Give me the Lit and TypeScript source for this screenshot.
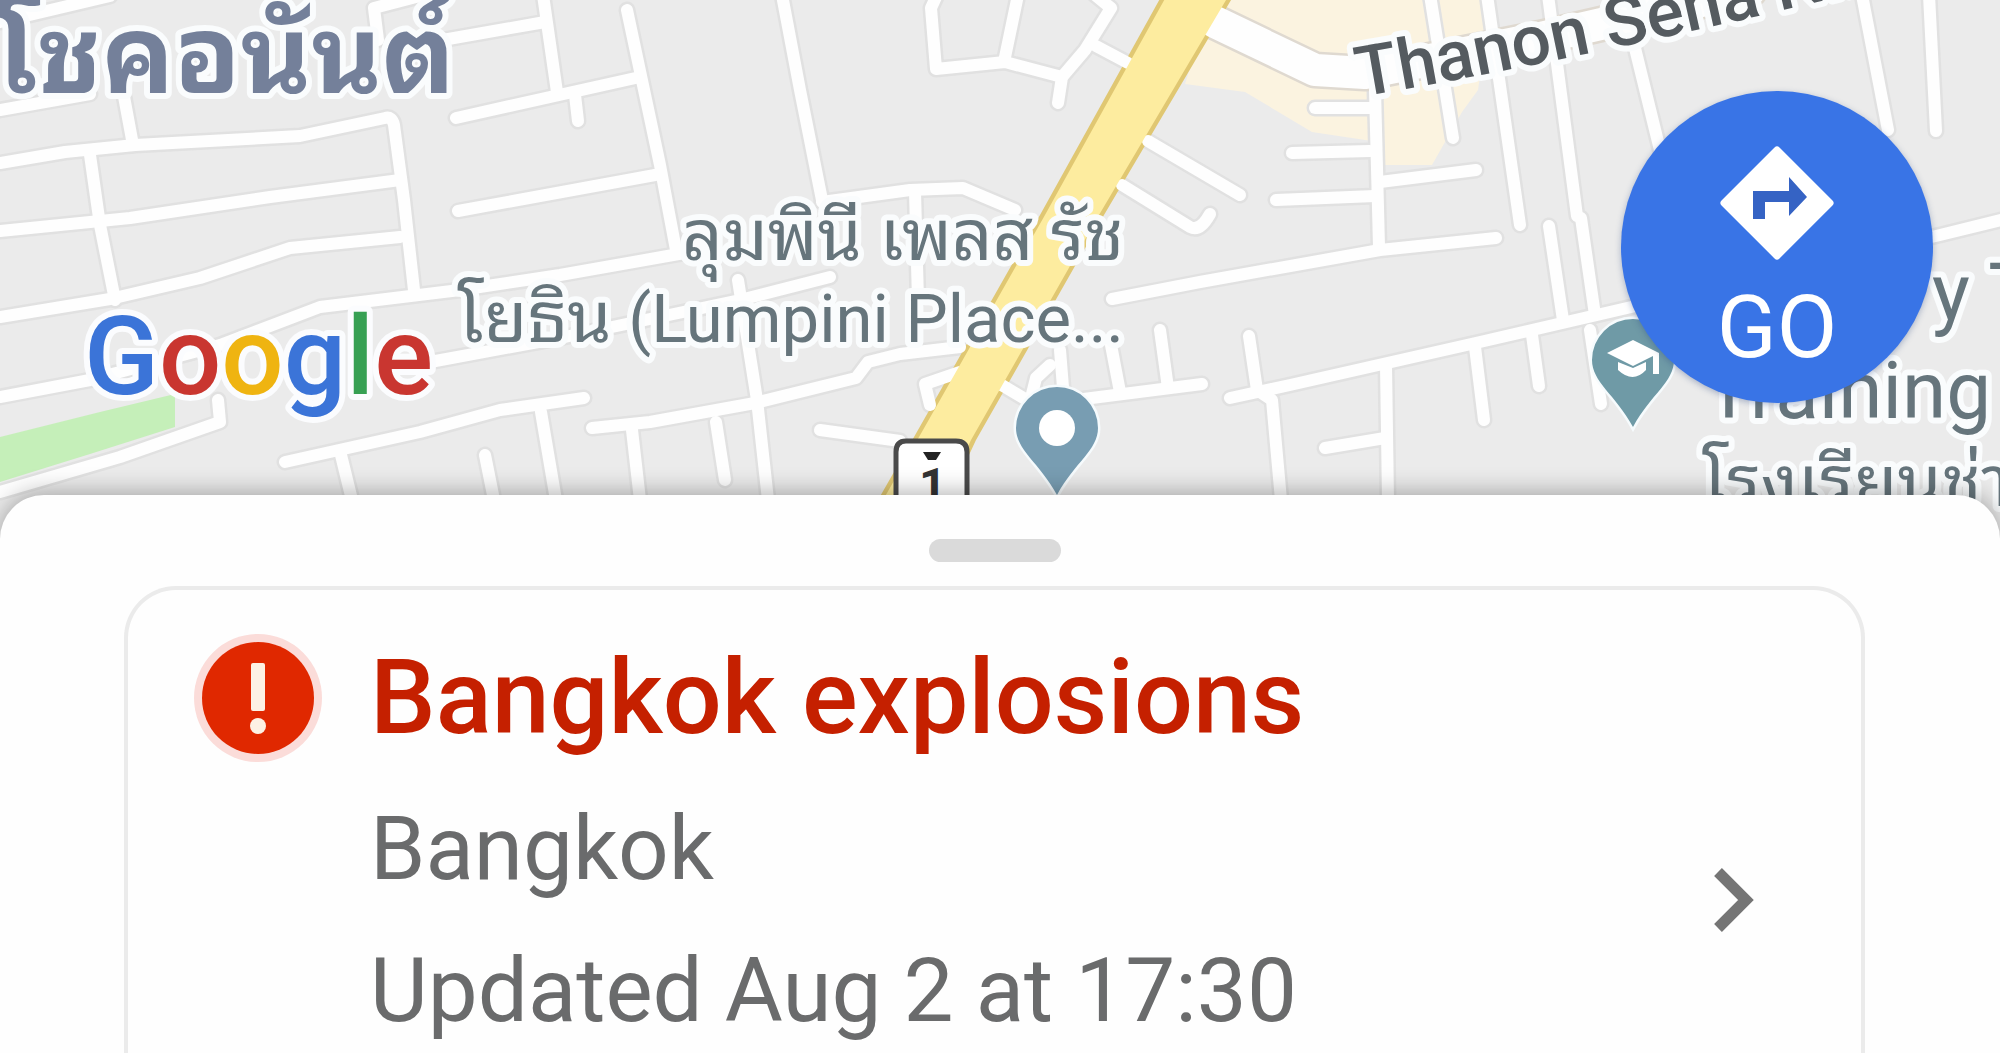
import { LitElement, html, css, svg } from "lit";
import { customElement } from "lit/decorators.js";

/* Minor streets, in map units (the map is 2000 units wide). */
const STREETS: string[] = [
  "M0 22L110-4",
  "M0 110L90 94",
  "M0 163L65 152L135 145L300 136L385 118Q392 116 394 125L404 200L414 290",
  "M120 75L133 145",
  "M0 231L130 218L270 197L400 180",
  "M90 155L100 225L115 300",
  "M0 317L110 299L200 278L290 248L400 237",
  "M0 397L90 380L220 345L320 307L460 290L560 275L690 252",
  "M430 362L560 338L740 300L830 277",
  "M218 400L220 422L120 457L0 492",
  "M285 462L420 432L500 410L584 398",
  "M341 455L352 500",
  "M485 455L494 500",
  "M541 412L556 500",
  "M592 428L650 422L755 403L856 378L868 362L900 354L960 347",
  "M632 430L640 500",
  "M716 422L725 480",
  "M738 280L757 400L768 500",
  "M456 118L640 77",
  "M575 95L578 121",
  "M458 211L655 175",
  "M543-5L557 92",
  "M420 44L545 22",
  "M378 40L374 8L420-4",
  "M627 10L660 165L676 250",
  "M782-5L800 90L822 200",
  "M822 202L910 190L963 188L1015 210",
  "M915 192L918 300",
  "M937-5L931 8L936 69L1005 62L1062 77",
  "M1018-5L1004 62",
  "M1095-5L1111 8L1085 50L1062 77L1058 103",
  "M1096 46L1128 63",
  "M1148 141L1240 195",
  "M1122 185L1190 227Q1200 232 1210 214",
  "M1315 108L1370 108",
  "M1292 153L1370 151",
  "M1276 200L1375 196",
  "M1380 182L1476 170",
  "M1375 90L1379 247",
  "M1112 299L1200 282L1380 250L1496 238",
  "M1430-5L1453 138",
  "M1487-5L1520 225",
  "M1548-5L1577 216",
  "M1581 218L1595 315",
  "M1549 226L1563 320",
  "M1230 398L1290 385L1480 342L1640 305L1940 235L2005 219",
  "M1249 336L1257 390L1272 400L1281 500",
  "M1386 365L1388 500",
  "M1325 448L1385 438",
  "M1475 347L1484 420",
  "M1532 335L1539 386",
  "M1590 330L1601 404",
  "M1060 350L1064 400",
  "M1060 402L1202 384",
  "M1111 345L1120 392",
  "M1160 330L1168 388",
  "M960 372L925 384L930 405",
  "M1000 384L1030 402L1036 378L1050 365",
  "M820 430L900 441",
  "M1633 40L1660 150",
  "M1862-5L1888 130",
  "M1929-5L1936 131",
];

const streets = svg`${STREETS.map((d) => svg`<path d=${d} />`)}`;

/* Teardrop marker with its centre at the origin and its tip 67 units below. */
const PIN = "M0-41A41 41 0 0 1 41 0C41 22 18 34 0 67C-18 34-41 22-41 0A41 41 0 0 1 0-41Z";

@customElement("map-view")
export class MapView extends LitElement {
  static styles = css`
    :host {
      display: block;
      background: #ebebeb;
    }
    .map {
      display: block;
      width: 100%;
      height: auto;
    }
    .line {
      fill: none;
      stroke-linecap: round;
      stroke-linejoin: round;
    }
    .casing {
      stroke: #e1e1e1;
      stroke-width: 17;
    }
    .street {
      stroke: #fefefe;
      stroke-width: 12;
    }
    .avenue-casing {
      stroke: #dfd9d0;
      stroke-width: 37;
    }
    .avenue {
      stroke: #fefefe;
      stroke-width: 32;
    }
    .label {
      font-family: Roboto, "Noto Sans Thai Looped", "Noto Sans Thai", "Noto Sans", sans-serif;
      fill: #66757c;
      stroke: #fafcfd;
      stroke-width: 12;
      stroke-linejoin: round;
      paint-order: stroke;
    }
    .place {
      font-size: 67px;
    }
    .thai {
      font-size: 71px;
    }
    .school {
      font-size: 80px;
    }
    .district {
      font-size: 108px;
      font-weight: 700;
      fill: #74809a;
    }
    .road-name {
      font-size: 70px;
      font-weight: 500;
      fill: #555b60;
    }
    .shield-number {
      font-family: Roboto, sans-serif;
      font-size: 48px;
      font-weight: 700;
      fill: #333;
    }
    .logo {
      font-family: Roboto, sans-serif;
      font-size: 110px;
      font-weight: 500;
      stroke: #fbfcfe;
      stroke-width: 12;
      stroke-linejoin: round;
      paint-order: stroke;
    }
    .blue {
      fill: #3b74d8;
    }
    .red {
      fill: #c93630;
    }
    .yellow {
      fill: #efb411;
    }
    .green {
      fill: #37a053;
    }
  `;

  render() {
    return html`
      <svg class="map" viewBox="0 0 2000 540" role="img" aria-label="Map">
        <rect width="2000" height="540" fill="#ebebeb" />
        <path
          d="M1225-5H1492L1478 90L1462 112L1432 165H1385V143L1312 132L1245 92L1185 84L1200 36Z"
          fill="#fbf3e0"
        />
        <path d="M0 437L100 412L175 394V427L90 454L0 482Z" fill="#c5efb9" />

        <g class="line casing">${streets}</g>
        <path class="line avenue-casing" d="M1215 22L1315 70L1365 73L1540 38L1750-10" />
        <path d="M1162-5L1040 215L918 430L878 500L948 500L976 440L1104 215L1234-5Z" fill="#e0c772" />
        <g class="line street">${streets}</g>
        <path class="line avenue" d="M1215 22L1315 70L1365 73L1540 38L1750-10" />
        <path d="M1167-5L1045 215L923 430L883 500L943 500L971 440L1099 215L1229-5Z" fill="#fdec9f" />

        <path
          d="M906 441H956Q967 441 967 452V545H896V452Q896 441 906 441Z"
          fill="#fff"
          stroke="#4a4a4a"
          stroke-width="5"
        />
        <path d="M923 452H941L936 460H928Z" fill="#222" />
        <text class="shield-number" x="919" y="502">1</text>

        <g transform="translate(1057 428)">
          <path d=${PIN} fill="#789db2" stroke="#f6fbfd" stroke-width="5" paint-order="stroke" />
          <circle r="18" fill="#fff" />
        </g>
        <g transform="translate(1633 360)">
          <path d=${PIN} fill="#6f9aa6" stroke="#f6fbfd" stroke-width="5" paint-order="stroke" />
          <path d="M-26-7L0-20L26-7V14H20V-4L0 6Z" fill="#fff" />
          <path d="M-15 2V10Q0 24 13 10V2L0 8Z" fill="#fff" />
        </g>

        <text class="label district" x="-4" y="93">โชคอนันต์</text>
        <text class="label thai" x="1124" y="260" text-anchor="end">ลุมพินี เพลส รัช</text>
        <text class="label place" x="1124" y="342" text-anchor="end"><tspan class="thai">โยธิน</tspan> (Lumpini Place...</text>
        <path id="road-line" d="M1360 97Q1600 56 1900-18" fill="none" />
        <text class="label road-name">
          <textPath href="#road-line">Thanon Sena Nikhom</textPath>
        </text>
        <text class="label school" x="1932" y="320">y T</text>
        <text class="label school" x="1705" y="418">Training</text>
        <text class="label thai" x="1702" y="506">โรงเรียนช่าง</text>

        <text class="logo" x="84" y="394">
          <tspan class="blue">G</tspan><tspan class="red">o</tspan><tspan class="yellow">o</tspan><tspan class="blue">g</tspan><tspan class="green">l</tspan><tspan class="red">e</tspan>
        </text>
      </svg>
    `;
  }
}

@customElement("alert-card")
export class AlertCard extends LitElement {
  static styles = css`
    :host {
      display: flex;
    }
    .card {
      flex: 1;
      display: grid;
      grid-template-columns: 128px minmax(0, 1fr) 48px;
      column-gap: 48px;
      padding: 44px 104px 0 66px;
      border: 4px solid #ebebeb;
      border-bottom: 0;
      border-radius: 52px 52px 0 0;
      color: #6a6b6c;
      text-decoration: none;
      font-family: Roboto, sans-serif;
    }
    .badge {
      width: 128px;
      height: 128px;
    }
    .text {
      display: flex;
      flex-direction: column;
    }
    .title {
      margin: 0 0 16px;
      font-size: 104px;
      font-weight: 500;
      line-height: 128px;
      color: #c52000;
    }
    .line {
      margin: 0;
      font-size: 89px;
      line-height: 142px;
    }
    .chevron {
      width: 48px;
      height: 72px;
      margin-top: 230px;
    }
  `;

  render() {
    return html`
      <a class="card" href="#bangkok-explosions">
        <svg class="badge" viewBox="0 0 128 128" aria-hidden="true">
          <circle cx="64" cy="64" r="64" fill="#fbdcd9" />
          <circle cx="64" cy="64" r="56" fill="#e02800" />
          <rect x="57" y="29" width="14" height="48" rx="2" fill="#fdf1e4" />
          <circle cx="64" cy="92" r="8" fill="#fdf1e4" />
        </svg>
        <div class="text">
          <h1 class="title">Bangkok explosions</h1>
          <p class="line">Bangkok</p>
          <p class="line">Updated Aug 2 at 17:30</p>
        </div>
        <svg class="chevron" viewBox="0 0 48 72" aria-hidden="true">
          <path d="M9 8L37 36L9 64" fill="none" stroke="#757575" stroke-width="11" />
        </svg>
      </a>
    `;
  }
}

@customElement("app-root")
export class AppRoot extends LitElement {
  static styles = css`
    :host {
      display: flex;
      flex-direction: column;
      position: relative;
      height: 100vh;
      overflow: hidden;
      background: #fefefe;
      font-family: Roboto, sans-serif;
    }
    .go {
      position: absolute;
      top: 91px;
      right: 67px;
      display: flex;
      flex-direction: column;
      align-items: center;
      gap: 16px;
      width: 312px;
      height: 312px;
      padding: 52px 0 0;
      border: 0;
      border-radius: 50%;
      background: #3974e6;
      box-shadow: 0 2px 6px rgba(40, 70, 130, 0.35);
      color: #fff;
      font-family: Roboto, sans-serif;
      font-size: 88px;
      line-height: 96px;
      cursor: pointer;
    }
    .turn {
      width: 120px;
      height: 120px;
      flex: none;
    }
    .sheet {
      position: relative;
      flex: 1;
      display: flex;
      flex-direction: column;
      margin-top: -45px;
      padding: 44px 135px 0 124px;
      border-radius: 44px 44px 0 0;
      background: #fefefe;
      box-shadow: 0 -2px 24px rgba(0, 0, 0, 0.32);
    }
    .handle {
      align-self: center;
      width: 132px;
      height: 23px;
      margin: 0 0 24px;
      padding: 0;
      border: 0;
      border-radius: 12px;
      background: #dadada;
      flex: none;
    }
    .alert {
      flex: 1;
    }
  `;

  render() {
    return html`
      <map-view></map-view>
      <button class="go" type="button">
        <svg class="turn" viewBox="0 0 120 120" aria-hidden="true">
          <path
            d="M60 7L113 60L60 113L7 60Z"
            fill="#fff"
            stroke="#fff"
            stroke-width="7"
            stroke-linejoin="round"
          />
          <path d="M36 76V48H72V34L90 54L72 73V59H48V76Z" fill="#3563c4" />
        </svg>
        GO
      </button>
      <main class="sheet">
        <button class="handle" type="button" aria-label="Expand details"></button>
        <alert-card class="alert"></alert-card>
      </main>
    `;
  }
}
